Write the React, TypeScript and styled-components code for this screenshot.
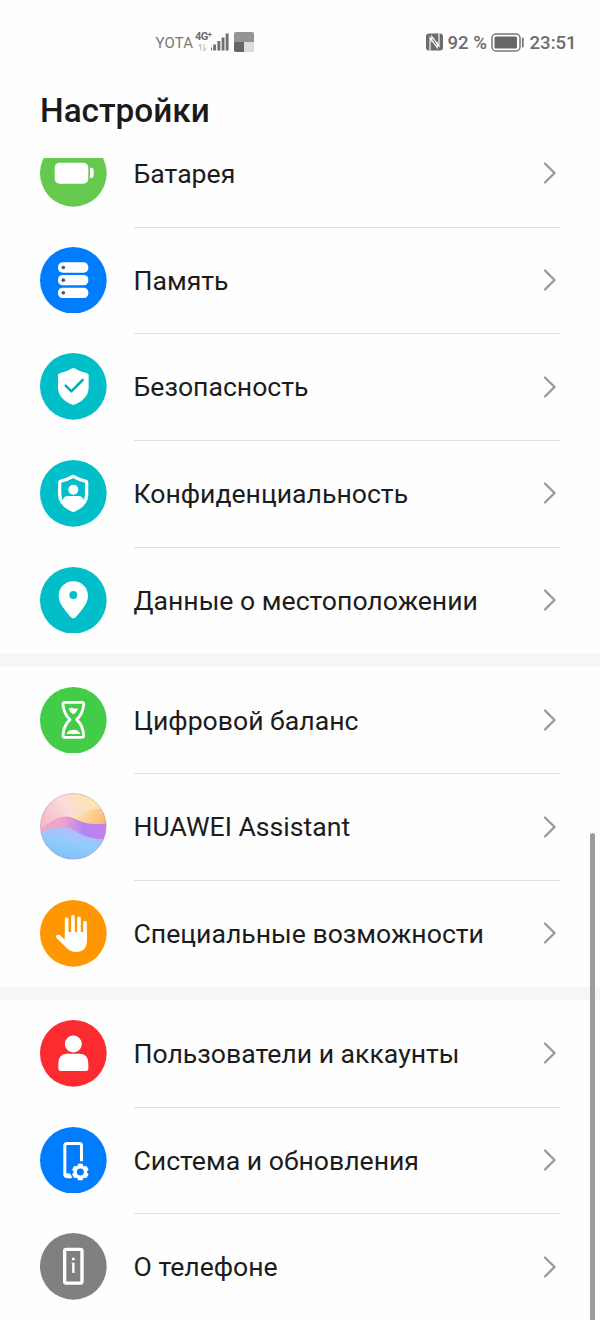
import React from "react";
import styled, { createGlobalStyle } from "styled-components";

const GlobalStyle = createGlobalStyle`
  * { box-sizing: border-box; }
  html, body { margin: 0; padding: 0; background: #fefefe; }
  body { font-family: Roboto, "Noto Sans", sans-serif; color: #1c1c1c; overflow: hidden; }
`;

const Screen = styled.main`
  position: relative;
  width: 600px;
  height: 1320px;
  display: flex;
  flex-direction: column;
  overflow: hidden;
  background: #fefefe;
`;

const StatusBar = styled.header`
  display: flex;
  align-items: center;
  justify-content: space-between;
  height: 84px;
  padding: 0 24px 0 155.5px;
  color: #6c6c6c;
  flex: none;
`;

const StatusGroup = styled.div`
  display: flex;
  align-items: center;
`;

const Carrier = styled.span`
  width: 39.5px;
  font-size: 15px;
  line-height: 20px;
  letter-spacing: 0.15px;
  color: #787878;
  white-space: nowrap;
  padding-top: 2px;
`;

const Network = styled.div`
  display: flex;
  flex-direction: column;
  width: 16px;
  height: 22px;
`;

const NetworkType = styled.span`
  display: flex;
  align-items: flex-start;
  font-size: 11px;
  line-height: 11px;
  font-weight: 700;
  white-space: nowrap;
  letter-spacing: -0.6px;
`;

const Plus = styled.span`
  font-size: 8px;
  line-height: 7px;
`;

const StatusText = styled.span<{ $width: number }>`
  width: ${(p) => p.$width}px;
  font-size: 18.6px;
  font-weight: 500;
  line-height: 24px;
  white-space: nowrap;
  padding-top: 2px;
`;

const Glyph = styled.svg<{ $gap?: number }>`
  display: block;
  flex: none;
  margin-right: ${(p) => p.$gap ?? 0}px;
`;

const Title = styled.h1`
  flex: none;
  height: 73.6px;
  margin: 0;
  padding: 6px 0 0 40px;
  font-size: 33.33px;
  line-height: 42px;
  font-weight: 500;
  color: #1a1a1a;
`;

const Viewport = styled.div`
  flex: 1;
  min-height: 0;
  overflow: hidden;
`;

const List = styled.div`
  margin-top: -37.6px;
`;

const Group = styled.section`
  & + & {
    padding-top: 13.334px;
    background: linear-gradient(#f6f6f6, #f6f6f6) top / 100% 13.334px no-repeat;
  }
`;

const Row = styled.div`
  display: flex;
  height: 106.667px;
  padding: 0 40px;
`;

const IconSlot = styled.div`
  width: 93.5px;
  display: flex;
  align-items: center;
  flex: none;
`;

const RowBody = styled.div<{ $last: boolean }>`
  flex: 1;
  display: flex;
  align-items: center;
  justify-content: space-between;
  padding-right: 3px;
  box-shadow: ${(p) => (p.$last ? "none" : "0 1px 0 #e0e0e0")};
`;

const Label = styled.span`
  font-size: 26.62px;
  line-height: 34px;
  white-space: nowrap;
  padding-top: 1.7px;
`;

const ScrollThumb = styled.div`
  position: absolute;
  top: 833px;
  right: 5px;
  width: 5px;
  height: 500px;
  border-radius: 3px;
  background: #9c9c9c;
`;

const Disc = ({ color, children }: { color: string; children: React.ReactNode }) => (
  <Glyph width="66.67" height="66.67" viewBox="0 0 200 200">
    <circle cx="100" cy="100" r="100" fill={color} />
    {children}
  </Glyph>
);

const Battery = () => (
  <Disc color="#64c94c">
    <rect x="44" y="68" width="101" height="63" rx="15" fill="#fff" />
    <path d="M150 83h4q7 0 7 7v17q0 7-7 7h-4z" fill="#fff" />
  </Disc>
);

const Storage = () => (
  <Disc color="#007dff">
    {[46, 84, 122].map((y) => (
      <g key={y}>
        <rect x="54" y={y} width="91" height="31" rx="14" fill="#fff" />
        <circle cx="70" cy={y + 15.5} r="5.500" fill="#2d6090" />
      </g>
    ))}
  </Disc>
);

const shield = "M100 44Q122 57 141 61Q146 62 146 67V103C146 130 126 147 100 156C74 147 54 130 54 103V67Q54 62 59 61Q78 57 100 44Z";

const Security = () => (
  <Disc color="#00bfc9">
    <path d={shield} fill="#fff" />
    <path d="M77 98L94 115L128 81" fill="none" stroke="#00aeb8" strokeWidth="7.500" strokeLinecap="round" strokeLinejoin="round" />
  </Disc>
);

const Privacy = () => (
  <Disc color="#00bfc9">
    <path d="M100 49Q119 60 136 63.500Q140 64.500 140 68V103C140 127 123 142 100 151C77 142 59 127 59 103V68Q59 64.500 63 63.500Q80 60 100 49Z" fill="none" stroke="#fff" strokeWidth="10" strokeLinejoin="round" />
    <circle cx="100" cy="89" r="15" fill="#fff" />
    <path d="M67 125Q70 108 84 108H115Q129 108 133 125Q124 141 100 151Q76 141 67 125Z" fill="#fff" />
  </Disc>
);

const Location = () => (
  <Disc color="#00bfc9">
    <path fillRule="evenodd" fill="#fff" d="M100 43C75 43 56 62 56 86C56 112 82 137 93 151Q100 158 107 151C118 137 144 112 144 86C144 62 125 43 100 43ZM100 72A12 12 0 1 1 100 96A12 12 0 1 1 100 72Z" />
  </Disc>
);

const Balance = () => (
  <Disc color="#43cc47">
    <path d="M75 46H125Q132 46 131 53C129 76 121 88 110 98C121 108 129 121 131 144Q132 151 125 151H75Q68 151 69 144C71 121 79 108 90 98C79 88 71 76 69 53Q68 46 75 46Z" fill="none" stroke="#fff" strokeWidth="8.500" strokeLinejoin="round" />
    <path d="M86 66Q93 60 99 63Q106 67 114 63Q112 75 100 82Q88 75 86 66Z" fill="#fff" />
    <path d="M79 141Q83 133 90 130Q100 126 110 130Q118 133 121 141Z" fill="#fff" />
  </Disc>
);

const Assistant = () => (
  <Glyph width="66.67" height="66.67" viewBox="0 0 200 200">
    <defs>
      <clipPath id="orb"><circle cx="100" cy="100" r="98.500" /></clipPath>
      <linearGradient id="sky" x1="0.05" y1="0.6" x2="0.9" y2="0.1">
        <stop offset="0" stopColor="#f5b3c9" />
        <stop offset="0.5" stopColor="#fadcdb" />
        <stop offset="1" stopColor="#fde89f" />
      </linearGradient>
      <linearGradient id="sun" x1="0" y1="0.3" x2="1" y2="0.7">
        <stop offset="0" stopColor="#fdeac0" />
        <stop offset="1" stopColor="#fdb46c" />
      </linearGradient>
      <linearGradient id="rose" x1="0" y1="0" x2="1" y2="0">
        <stop offset="0" stopColor="#f0aac6" />
        <stop offset="0.35" stopColor="#eda2c8" />
        <stop offset="0.65" stopColor="#b585f3" />
        <stop offset="1" stopColor="#c281ea" />
      </linearGradient>
      <linearGradient id="sea" x1="0.7" y1="0" x2="0.3" y2="1">
        <stop offset="0" stopColor="#b9b6fb" />
        <stop offset="0.5" stopColor="#98cdfc" />
        <stop offset="1" stopColor="#7dc1fc" />
      </linearGradient>
    </defs>
    <g clipPath="url(#orb)">
      <rect width="200" height="200" fill="url(#sky)" />
      <path d="M88 68C118 70 150 38 200 50V110H130Q104 90 88 68Z" fill="url(#sun)" />
      <path d="M0 112C35 80 64 65 93 73C128 87 145 99 200 91V150H0Z" fill="url(#rose)" />
      <path d="M0 120C30 104 67 98 95 108C130 130 160 140 200 138V200H0Z" fill="url(#sea)" />
      <path d="M0 133C45 112 78 148 122 145C156 143 174 146 200 133V200H0Z" fill="#75c7ff" opacity="0.2" />
    </g>
    <circle cx="100" cy="100" r="98.500" fill="none" stroke="#b58baa" strokeWidth="2.500" opacity="0.6" />
  </Glyph>
);

const Accessibility = () => (
  <Disc color="#ff9800">
    <path d="M80 57V120M99 50V110M117 55V110M135 68V120" stroke="#fff" strokeWidth="11" strokeLinecap="round" />
    <path d="M74.500 96H140.500V127Q140 156 109 156Q91 156 80 144L49 113Q46 108 51 105Q55 103 60 106L74.500 119Z" fill="#fff" />
  </Disc>
);

const Users = () => (
  <Disc color="#fb2b30">
    <circle cx="100" cy="72" r="25.500" fill="#fff" />
    <path d="M55 130Q55 101 82 101H118Q145 101 145 130V146Q145 153 138 153H62Q55 153 55 146Z" fill="#fff" />
  </Disc>
);

const System = () => (
  <Disc color="#007dff">
    <path d="M124.500 103V56Q124.500 49.500 118 49.500H81Q74.500 49.500 74.500 56V142Q74.500 149 81 149H94" fill="none" stroke="#fff" strokeWidth="9" />
    <path d="M79 139H89L97 153H79Z" fill="#fff" />
    <g transform="translate(121 135)">
      {[0, 60, 120, 180, 240, 300].map((a) => (
        <path key={a} transform={`rotate(${a})`} d="M-8 -17L-6 -24H6L8 -17Z" fill="#fff" stroke="#fff" strokeWidth="2" strokeLinejoin="round" />
      ))}
      <circle r="15.500" fill="none" stroke="#fff" strokeWidth="10" />
    </g>
  </Disc>
);

const About = () => (
  <Disc color="#808080">
    <rect x="74" y="49" width="52" height="101.500" rx="5" fill="none" stroke="#fff" strokeWidth="10" />
    <path d="M96 74h8v8h-8zM95 89h8.500v27h1.500v3H96v-3h0.500V92h-1.500z" fill="#fff" />
  </Disc>
);

const groups: { label: string; icon: React.FC }[][] = [
  [
    { label: "Батарея", icon: Battery },
    { label: "Память", icon: Storage },
    { label: "Безопасность", icon: Security },
    { label: "Конфиденциальность", icon: Privacy },
    { label: "Данные о местоположении", icon: Location },
  ],
  [
    { label: "Цифровой баланс", icon: Balance },
    { label: "HUAWEI Assistant", icon: Assistant },
    { label: "Специальные возможности", icon: Accessibility },
  ],
  [
    { label: "Пользователи и аккаунты", icon: Users },
    { label: "Система и обновления", icon: System },
    { label: "О телефоне", icon: About },
  ],
];

const Chevron = () => (
  <Glyph width="14" height="22" viewBox="0 0 14 22">
    <path d="M2 1.500L11.500 11L2 20.500" fill="none" stroke="#999" strokeWidth="2.300" strokeLinecap="round" strokeLinejoin="round" />
  </Glyph>
);

export default function App() {
  return (
    <>
      <GlobalStyle />
      <Screen>
        <StatusBar>
          <StatusGroup>
            <Carrier>YOTA</Carrier>
            <Network>
              <NetworkType>4G<Plus>+</Plus></NetworkType>
              <Glyph width="14" height="10" viewBox="0 0 14 10">
                <path d="M5.500 8.500V2M3.500 4L5.500 2M9 2V8.500L11 6.500" fill="none" stroke="#c4c4c4" strokeWidth="1.200" />
              </Glyph>
            </Network>
            <Glyph width="20" height="20" viewBox="0 0 20 20" $gap={3}>
              <path d="M0 15h2.800v3H0zM4 12h2.900v6H4zM8.200 8.500h2.900V18H8.200zM12.400 5h2.900v13h-2.900zM16.500 1h2.900v17h-2.900z" fill="#707070" transform="translate(-1.800 0.500)" />
            </Glyph>
            <Glyph width="20" height="20" viewBox="0 0 20 20">
              <rect width="20" height="20" rx="2" fill="#949494" />
              <path d="M0 10h10v10H2q-2 0-2-2z" fill="#666" />
              <path d="M10 10h10v8q0 2-2 2h-8z" fill="#dcdcdc" />
            </Glyph>
          </StatusGroup>
          <StatusGroup>
            <Glyph width="17" height="18" viewBox="0 0 17 18" $gap={5}>
              <rect x="0" y="0.500" width="17" height="17" rx="3" fill="#6c6c6c" />
              <path d="M4 17.500V4.800L11.200 14.500V9M13 0.500V13.200L5.800 3.500V9" fill="none" stroke="#fefefe" strokeWidth="1.200" />
            </Glyph>
            <StatusText $width={43}>92 %</StatusText>
            <Glyph width="34" height="19" viewBox="0 0 34 19" $gap={5}>
              <rect x="1" y="1" width="28" height="17" rx="4" fill="none" stroke="#777" strokeWidth="1.500" />
              <rect x="3.500" y="3.500" width="22.500" height="12" rx="1.500" fill="#666" />
              <path d="M31.800 5.500V13.500" stroke="#777" strokeWidth="1.800" strokeLinecap="round" />
            </Glyph>
            <StatusText $width={46.5}>23:51</StatusText>
          </StatusGroup>
        </StatusBar>
        <Title>Настройки</Title>
        <Viewport>
          <List>
            {groups.map((rows, g) => (
              <Group key={g}>
                {rows.map(({ label, icon: Icon }, i) => (
                  <Row key={label}>
                    <IconSlot><Icon /></IconSlot>
                    <RowBody $last={i === rows.length - 1}>
                      <Label>{label}</Label>
                      <Chevron />
                    </RowBody>
                  </Row>
                ))}
              </Group>
            ))}
          </List>
        </Viewport>
        <ScrollThumb />
      </Screen>
    </>
  );
}
